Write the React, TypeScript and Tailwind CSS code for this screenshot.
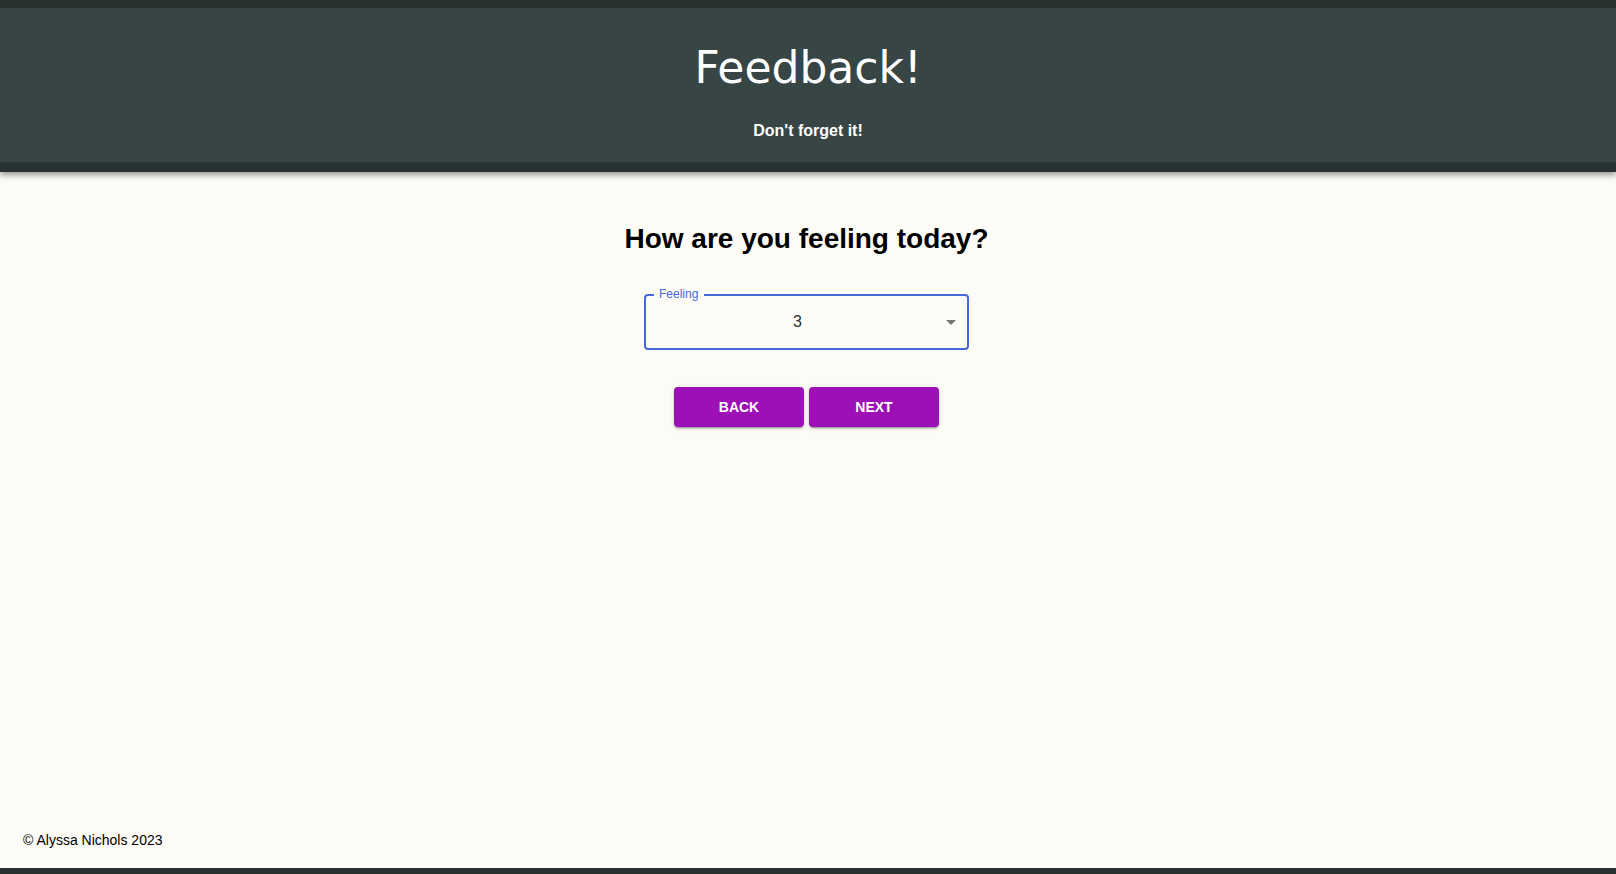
import React from 'react';

const sans = "font-['Liberation_Sans',Arial,Helvetica,sans-serif]";

const FeelingSelect: React.FC<{ label: string; value: string }> = ({ label, value }) => (
  <div className="relative h-14 w-[325px] rounded-[4px] border-2 border-[#4469d8]">
    <span className="absolute -top-[10px] left-[8px] bg-[#fdfbf6] pl-[5px] pr-[6px] text-xs leading-4 text-[#4469d8]">
      {label}
    </span>
    <div className="flex h-full items-center pl-[12px] pr-[30px]">
      <span className="flex-1 text-center text-base leading-6 text-black/85">{value}</span>
    </div>
    <svg
      viewBox="0 0 24 24"
      className="absolute right-[4px] top-1/2 h-6 w-6 -translate-y-1/2 fill-[#757575]"
    >
      <path d="M7 10l5 5 5-5z" />
    </svg>
  </div>
);

const NavButton: React.FC<{ children: React.ReactNode }> = ({ children }) => (
  <button
    type="button"
    className="h-10 w-[130px] rounded-[4px] bg-[#9c10b5] text-sm font-bold uppercase text-white shadow-[0px_3px_1px_-2px_rgba(0,0,0,0.2),0px_2px_2px_0px_rgba(0,0,0,0.14),0px_1px_5px_0px_rgba(0,0,0,0.12)]"
  >
    {children}
  </button>
);

export default function App() {
  return (
    <div className={`flex min-h-screen flex-col bg-[#fdfbf6] ${sans}`}>
      <header className="relative z-10 border-t-8 border-b-[10px] border-[#283231] bg-[#374545] pt-[38px] pb-[19px] text-center text-white shadow-[0_3px_6px_rgba(0,0,0,0.4)]">
        <h1 className="font-['DejaVu_Sans',Verdana,sans-serif] text-[44px] leading-[44px]">Feedback!</h1>
        <p className="mt-[29px] text-base font-bold leading-6">Don't forget it!</p>
      </header>

      <main className="flex flex-1 flex-col items-center pr-[3px] pt-[49px]">
        <h2 className="text-[28px] font-bold leading-9 text-black">How are you feeling today?</h2>
        <div className="mt-[37px]">
          <FeelingSelect label="Feeling" value="3" />
        </div>
        <div className="mt-[37px] flex gap-[5px]">
          <NavButton>Back</NavButton>
          <NavButton>Next</NavButton>
        </div>
      </main>

      <footer className="border-b-[6px] border-[#283231] pb-[18px] pl-[23px]">
        <p className="text-sm leading-5 text-black">© Alyssa Nichols 2023</p>
      </footer>
    </div>
  );
}
